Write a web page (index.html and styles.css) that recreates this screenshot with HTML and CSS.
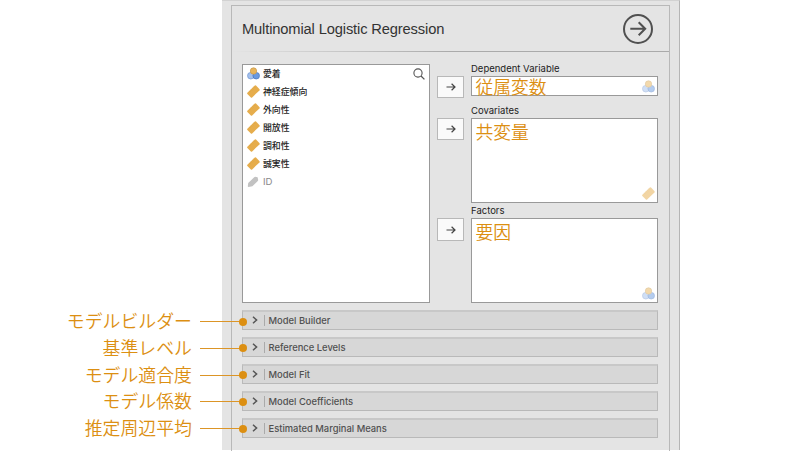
FILE: index.html
```html
<!DOCTYPE html>
<html lang="ja">
<head>
<meta charset="utf-8">
<title>Multinomial Logistic Regression</title>
<link rel="stylesheet" href="styles.css">
</head>
<body>
<svg width="0" height="0" class="defs">
  <symbol id="nominal" viewBox="0 0 13 13">
    <circle cx="3.8" cy="8.7" r="3.3" fill="#a3c0ec" stroke="#7195d0" stroke-width=".7"/>
    <circle cx="9.2" cy="8.7" r="3.3" fill="#5b8fdc" stroke="#4676c0" stroke-width=".7" fill-opacity=".9"/>
    <circle cx="6.5" cy="4" r="3.2" fill="#e8b55c" stroke="#c79a4c" stroke-width=".7"/>
  </symbol>
  <symbol id="ruler" viewBox="0 0 14 14">
    <path d="M.4 8.4 8.4.5Q9 0 9.7.6L13.5 4.7Q13.9 5.2 13.4 5.8L5.5 13.4Q4.8 13.9 4.2 13.4L.4 9.7Q-.1 9 .4 8.4Z" fill="#e6ad4c"/>
    <path d="m2.6 6.4 1.2 1.2M4.2 4.8l1.2 1.2M5.8 3.3l1.2 1.2M7.4 1.8l1.2 1.2" stroke="#d29a3e" stroke-width=".5" fill="none"/>
  </symbol>
  <symbol id="tag" viewBox="0 0 12 12">
    <path d="M1.2 7 7.2 1.2Q7.6.8 8.2.8L10.6 1.3 11.2 4Q11.2 4.5 10.8 4.9L5.4 10.2 1.5 11Q.8 11 .8 10.3Z" fill="#c2c2c2"/>
  </symbol>
  <symbol id="arrow" viewBox="0 0 10 8">
    <path d="M.5 4H9M5.6.8 9 4 5.6 7.2" fill="none" stroke="#444" stroke-width="1.2"/>
  </symbol>
</svg>
<div class="page">
  <div class="notes">
    <div class="note">モデルビルダー<i class="lead"></i></div>
    <div class="note">基準レベル<i class="lead"></i></div>
    <div class="note">モデル適合度<i class="lead"></i></div>
    <div class="note">モデル係数<i class="lead"></i></div>
    <div class="note">推定周辺平均<i class="lead"></i></div>
  </div>
  <main class="window">
    <section class="panel">
      <header class="head">
        <h1>Multinomial Logistic Regression</h1>
        <svg class="go" viewBox="0 0 32 32"><circle cx="16" cy="16" r="14" fill="none" stroke="#505050" stroke-width="2"/><path d="M8.3 15.8H23M16.7 9.3l6.5 6.5-6.5 6.5" fill="none" stroke="#505050" stroke-width="2"/></svg>
      </header>
      <div class="fields">
        <div class="box list">
          <ul>
            <li><svg class="ic"><use href="#nominal"/></svg>愛着</li>
            <li><svg class="ic"><use href="#ruler"/></svg>神経症傾向</li>
            <li><svg class="ic"><use href="#ruler"/></svg>外向性</li>
            <li><svg class="ic"><use href="#ruler"/></svg>開放性</li>
            <li><svg class="ic"><use href="#ruler"/></svg>調和性</li>
            <li><svg class="ic"><use href="#ruler"/></svg>誠実性</li>
            <li class="off"><svg class="ic small"><use href="#tag"/></svg>ID</li>
          </ul>
          <svg class="search" viewBox="0 0 12 12"><circle cx="5" cy="5" r="4.1" fill="none" stroke="#555" stroke-width="1.1"/><path d="m8 8 3.4 3.4" stroke="#555" stroke-width="1.3"/></svg>
        </div>
        <div class="targets">
          <div class="target dep">
            <button><svg><use href="#arrow"/></svg></button>
            <div class="slot"><label>Dependent Variable</label><div class="box drop"><span>従属変数</span><svg class="type"><use href="#nominal"/></svg></div></div>
          </div>
          <div class="target cov">
            <button><svg><use href="#arrow"/></svg></button>
            <div class="slot"><label>Covariates</label><div class="box drop"><span>共変量</span><svg class="type"><use href="#ruler"/></svg></div></div>
          </div>
          <div class="target fac">
            <button><svg><use href="#arrow"/></svg></button>
            <div class="slot"><label>Factors</label><div class="box drop"><span>要因</span><svg class="type"><use href="#nominal"/></svg></div></div>
          </div>
        </div>
      </div>
      <div class="bars">
        <div class="bar"><svg viewBox="0 0 6 8"><path d="m1 .8 3.6 3.2L1 7.2"/></svg><span>Model Builder</span></div>
        <div class="bar"><svg viewBox="0 0 6 8"><path d="m1 .8 3.6 3.2L1 7.2"/></svg><span>Reference Levels</span></div>
        <div class="bar"><svg viewBox="0 0 6 8"><path d="m1 .8 3.6 3.2L1 7.2"/></svg><span>Model Fit</span></div>
        <div class="bar"><svg viewBox="0 0 6 8"><path d="m1 .8 3.6 3.2L1 7.2"/></svg><span>Model Coefficients</span></div>
        <div class="bar"><svg viewBox="0 0 6 8"><path d="m1 .8 3.6 3.2L1 7.2"/></svg><span>Estimated Marginal Means</span></div>
      </div>
    </section>
  </main>
</div>
</body>
</html>
```
FILE: styles.css
```css
* { box-sizing: border-box; }
body { margin: 0; background: #fff; font-family: Inter, "Noto Sans CJK JP", sans-serif; font-size: 10px; color: #222; }
svg { display: block; flex: none; }
.defs { position: absolute; }
.page { display: flex; width: 800px; height: 451px; overflow: hidden; }
.notes { width: 222px; padding: 307px 30px 0 0; flex: none; }
.note { position: relative; height: 26.8px; line-height: 26px; font-size: 17.9px; font-weight: 350; text-align: right; color: #dc8f12; white-space: nowrap; font-family: "Noto Sans CJK JP", sans-serif; }
.lead { position: absolute; left: 200px; top: 14px; width: 42px; height: 1px; background: #dc9526; z-index: 2; }
.lead::after { content: ""; position: absolute; right: -5px; top: -3.5px; width: 8px; height: 8px; border-radius: 50%; background: #dc8f12; }
.window { width: 458px; height: 450px; background: #e4e4e4; border-top: 1px solid #d2d2d2; border-right: 1px solid #b5b5b5; padding: 4px 9px 0; }
.panel { height: 446px; border: 1px solid #b8b8b8; border-bottom: 0; }
.head { height: 46px; padding: 0 15px 0 10px; display: flex; justify-content: space-between; align-items: center; border-bottom: 1px solid; border-image: linear-gradient(90deg, #e4e4e4, #aaa 50%) 1; }
h1 { margin: 1px 0 0; font: 14.7px "Liberation Sans", sans-serif; letter-spacing: -.14px; color: #333; }
.go { width: 32px; height: 32px; }
.fields { display: flex; margin: 12px 11px 0 10px; height: 239px; }
.box { background: #fff; border: 1px solid #999; }
.list { width: 188px; flex: none; display: flex; justify-content: space-between; padding: 0 4px; }
ul { margin: 0; padding: 0; list-style: none; }
li { height: 18px; display: flex; align-items: center; gap: 3px; font-size: 8.9px; font-weight: 500; line-height: 14px; padding-bottom: 1px; white-space: nowrap; }
.ic { width: 13px; height: 13px; }
.ic.small { width: 12px; height: 12px; margin-right: 1px; }
.off { color: #888; font-weight: 400; font-size: 9.6px; }
.search { width: 12px; height: 12px; margin-top: 3px; }
.targets { width: 229px; padding-left: 7px; flex: none; }
.target { display: flex; gap: 7px; }
button { width: 27px; height: 22px; margin: 12px 0 0; padding: 0; border: 1px solid #b8b8b8; background: #fafafa; display: flex; align-items: center; justify-content: center; flex: none; }
.fac button { height: 23px; }
button svg { width: 10px; height: 8px; }
.slot { width: 187px; display: flex; flex-direction: column; }
label { height: 12px; line-height: 10px; font-size: 9.5px; }
.drop { flex: 1; display: flex; justify-content: space-between; align-items: flex-end; padding: 0 2px 2px 3.5px; min-height: 0; }
.drop span { align-self: flex-start; font-size: 17.8px; line-height: 25px; font-weight: 350; color: #dc8f12; font-family: "Noto Sans CJK JP", sans-serif; }
.type { width: 13px; height: 13px; opacity: .5; }
.dep { height: 42px; }
.dep .slot { height: 32px; }
.dep .drop span { line-height: 18px; }
.cov { height: 100px; }
.cov .slot { height: 97px; }
.fac { height: 97px; }
.bars { margin: 7px 11px 0 10px; display: grid; gap: 7px; }
.bar { height: 20px; background: #d7d7d7; border: 1px solid #b9b9b9; border-top: 2px solid #c8c8c8; display: flex; align-items: center; padding: 0 0 1px 9px; gap: 6px; color: #505050; }
.bar svg { width: 6px; height: 8px; fill: none; stroke: #555; stroke-width: 1.5; }
.bar span { border-left: 1px solid #aaa; padding-left: 3.5px; line-height: 11px; font-size: 9.4px; font-weight: 500; }
```
